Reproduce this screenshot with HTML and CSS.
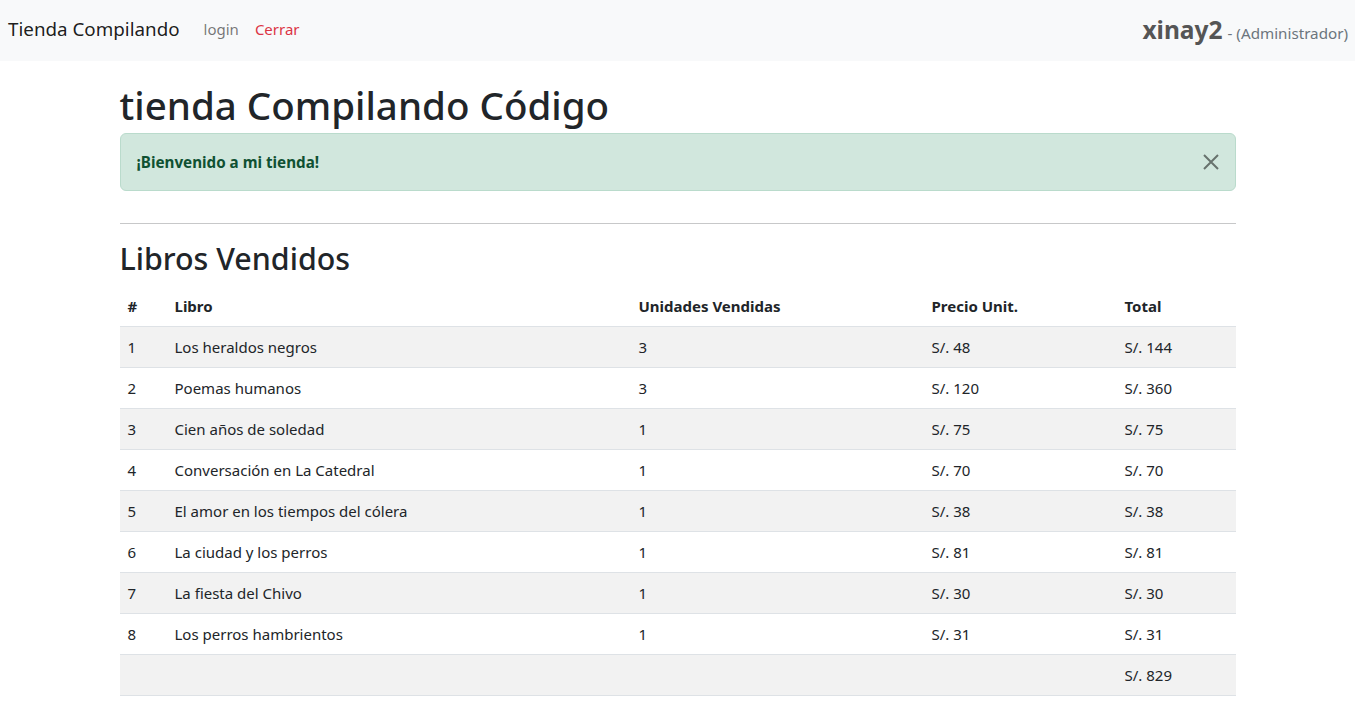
FILE: index.html
```html
<!DOCTYPE html>
<html lang="es">
<head>
<meta charset="utf-8">
<title>Tienda Compilando</title>
<link rel="stylesheet" href="styles.css">
</head>
<body>
<nav class="navbar">
  <div class="nav-left">
    <a class="brand" href="#">Tienda Compilando</a>
    <a class="nav-link" href="#">login</a>
    <a class="nav-link danger" href="#">Cerrar</a>
  </div>
  <div class="nav-right">
    <span class="user">xinay2</span>
    <span class="role">- (Administrador)</span>
  </div>
</nav>
<main class="container">
  <h1 class="title">tienda Compilando Código</h1>
  <div class="alert">
    <strong>¡Bienvenido a mi tienda!</strong>
    <button class="btn-close" type="button" aria-label="Close">
      <svg width="16" height="16" viewBox="0 0 16 16"><path d="M1 1L15 15M15 1L1 15" stroke="#000" stroke-width="2" fill="none"/></svg>
    </button>
  </div>
  <hr class="divider">
  <h2 class="subtitle">Libros Vendidos</h2>
  <table class="table">
    <colgroup>
      <col class="c1"><col class="c2"><col class="c3"><col class="c4"><col class="c5">
    </colgroup>
    <thead>
      <tr><th>#</th><th>Libro</th><th>Unidades Vendidas</th><th>Precio Unit.</th><th>Total</th></tr>
    </thead>
    <tbody>
      <tr><td>1</td><td>Los heraldos negros</td><td>3</td><td>S/. 48</td><td>S/. 144</td></tr>
      <tr><td>2</td><td>Poemas humanos</td><td>3</td><td>S/. 120</td><td>S/. 360</td></tr>
      <tr><td>3</td><td>Cien años de soledad</td><td>1</td><td>S/. 75</td><td>S/. 75</td></tr>
      <tr><td>4</td><td>Conversación en La Catedral</td><td>1</td><td>S/. 70</td><td>S/. 70</td></tr>
      <tr><td>5</td><td>El amor en los tiempos del cólera</td><td>1</td><td>S/. 38</td><td>S/. 38</td></tr>
      <tr><td>6</td><td>La ciudad y los perros</td><td>1</td><td>S/. 81</td><td>S/. 81</td></tr>
      <tr><td>7</td><td>La fiesta del Chivo</td><td>1</td><td>S/. 30</td><td>S/. 30</td></tr>
      <tr><td>8</td><td>Los perros hambrientos</td><td>1</td><td>S/. 31</td><td>S/. 31</td></tr>
      <tr><td></td><td></td><td></td><td></td><td>S/. 829</td></tr>
    </tbody>
  </table>
</main>
</body>
</html>
```
FILE: styles.css
```css
* { box-sizing: border-box; }
html, body { margin: 0; padding: 0; }
body {
  font-family: "Noto Sans", "Open Sans", sans-serif;
  font-size: 16px;
  line-height: 1.5;
  color: #212529;
  background: #fff;
}
a { text-decoration: none; }

.navbar {
  height: 61px;
  background: #f8f9fa;
  display: flex;
  justify-content: space-between;
  align-items: center;
  padding: 0 7px 0 8px;
}
.nav-left { display: flex; align-items: center; padding-bottom: 4px; }
.brand {
  font-size: 18.8px;
  line-height: 30px;
  color: rgba(0,0,0,.9);
  margin-right: 16px;
}
.nav-link {
  padding: 0 8px;
  color: rgba(0,0,0,.55);
  font-size: 15px;
  line-height: 24px;
}
.nav-link.danger { color: #dc3545; }
.nav-right { display: flex; align-items: baseline; }
.user {
  font-size: 24.5px;
  font-weight: 700;
  color: #555;
  margin-right: 5px;
}
.role { color: #6c757d; font-size: 15.2px; }

.container {
  width: 1116px;
  margin: 0 auto;
}
.title {
  font-size: 38.5px;
  font-weight: 500;
  line-height: 48px;
  margin: 20px 0 4px;
}
.alert {
  position: relative;
  background: #d1e7dd;
  border: 1px solid #badbcc;
  color: #0f5132;
  border-radius: 6px;
  padding: 16px 64px 16px 16px;
  font-size: 15.2px;
  line-height: 24px;
  margin-bottom: 32px;
}
.alert strong { font-weight: 700; }
.btn-close {
  position: absolute;
  top: 0;
  right: 0;
  height: 100%;
  padding: 0 16px;
  border: 0;
  background: transparent;
  opacity: .5;
  display: flex;
  align-items: center;
}
.divider {
  border: 0;
  border-top: 1px solid #212529;
  opacity: .25;
  margin: 0 0 16px;
}
.subtitle {
  font-size: 30.4px;
  font-weight: 500;
  line-height: 38px;
  margin: 0 0 8px;
}
.table {
  width: 100%;
  border-collapse: collapse;
  table-layout: fixed;
  font-size: 15px;
}
.c1 { width: 47px; }
.c2 { width: 464px; }
.c3 { width: 293px; }
.c4 { width: 193px; }
.c5 { width: 119px; }
.table th, .table td {
  padding: 8px;
  line-height: 24px;
  text-align: left;
  border-bottom: 1px solid #dee2e6;
  white-space: nowrap;
}
.table th { font-weight: 700; }
.table tbody tr:nth-child(odd) td { background: #f2f2f2; }
```
